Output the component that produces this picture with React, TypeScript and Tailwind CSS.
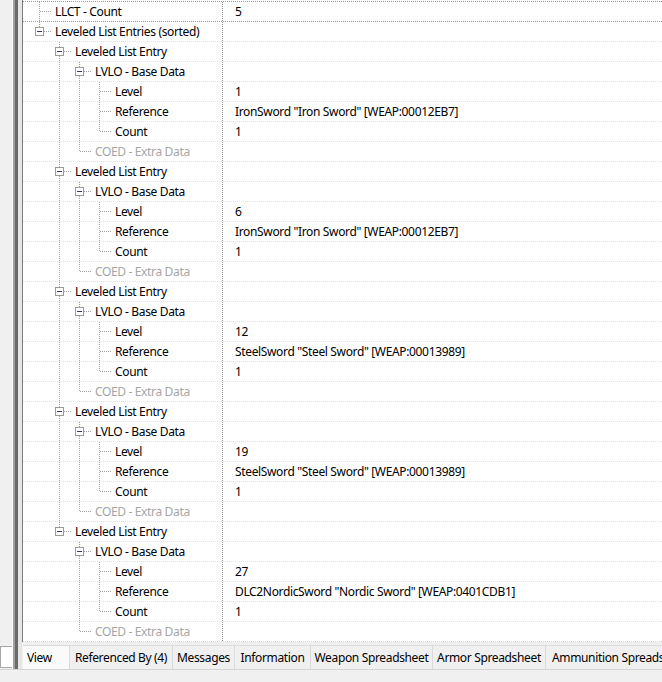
import React from 'react'

type Row = {
  level: number
  label: string
  value?: string
  expander?: boolean
  last?: boolean
  dim?: boolean
  cont: boolean[] // ancestor levels that keep a vertical line going
}

const entries: [string, string][] = [
  ['1', 'IronSword "Iron Sword" [WEAP:00012EB7]'],
  ['6', 'IronSword "Iron Sword" [WEAP:00012EB7]'],
  ['12', 'SteelSword "Steel Sword" [WEAP:00013989]'],
  ['19', 'SteelSword "Steel Sword" [WEAP:00013989]'],
  ['27', 'DLC2NordicSword "Nordic Sword" [WEAP:0401CDB1]'],
]

function buildRows(): Row[] {
  const rows: Row[] = [
    { level: 1, label: 'LLCT - Count', value: '5', cont: [] },
    { level: 1, label: 'Leveled List Entries (sorted)', expander: true, last: true, cont: [] },
  ]
  entries.forEach(([lvl, ref], i) => {
    const more = i < entries.length - 1
    rows.push({ level: 2, label: 'Leveled List Entry', expander: true, last: !more, cont: [false] })
    rows.push({ level: 3, label: 'LVLO - Base Data', expander: true, cont: [false, more] })
    rows.push({ level: 4, label: 'Level', value: lvl, cont: [false, more, true] })
    rows.push({ level: 4, label: 'Reference', value: ref, cont: [false, more, true] })
    rows.push({ level: 4, label: 'Count', value: '1', last: true, cont: [false, more, true] })
    rows.push({ level: 3, label: 'COED - Extra Data', dim: true, last: true, cont: [false, more] })
  })
  return rows
}

const LINE = '#a0a0a0'

function TreeLines({ row }: { row: Row }) {
  const w = 32 + 20 * (row.level - 1)
  const c = 16 + 20 * (row.level - 1)
  return (
    <svg width={w} height={19} className="shrink-0" shapeRendering="crispEdges">
      {row.cont.map((on, k) =>
        on ? (
          <line key={k} x1={16 + 20 * k + 0.5} y1={0} x2={16 + 20 * k + 0.5} y2={19} stroke={LINE} strokeDasharray="1 1" />
        ) : null,
      )}
      <line x1={c + 0.5} y1={0} x2={c + 0.5} y2={row.last ? 10 : 19} stroke={LINE} strokeDasharray="1 1" />
      <line x1={c + 1} y1={9.5} x2={w - 3} y2={9.5} stroke={LINE} strokeDasharray="1 1" />
      {row.expander && (
        <g>
          <rect x={c - 3.5} y={5.5} width={8} height={8} fill="#fff" stroke="#9a9a9a" />
          <line x1={c - 2} y1={9.5} x2={c + 3} y2={9.5} stroke="#2d3b6b" />
        </g>
      )}
    </svg>
  )
}

const tabs: { label: string; w: string }[] = [
  { label: 'View', w: 'w-[47px] justify-start pl-[4px] bg-[#fafafa]' },
  { label: 'Referenced By (4)', w: 'w-[103px] justify-center' },
  { label: 'Messages', w: 'w-[62px] justify-center' },
  { label: 'Information', w: 'w-[76px] justify-center' },
  { label: 'Weapon Spreadsheet', w: 'w-[122px] justify-center' },
  { label: 'Armor Spreadsheet', w: 'w-[113px] justify-center' },
  { label: 'Ammunition Spreadsheet', w: 'w-[140px] justify-start pl-[6px]' },
]

export default function App() {
  const rows = buildRows()
  return (
    <div
      className="flex h-[682px] w-[662px] flex-col overflow-hidden bg-[#f0f0f0] text-[12px] tracking-[-0.35px] text-black"
      style={{ fontFamily: '"Noto Sans", "Open Sans", sans-serif' }}
    >
      <div className="flex h-[669px] shrink-0">
        {/* left splitter strip */}
        <div className="flex w-[23px] shrink-0">
          <div className="flex w-[12px] flex-col justify-end pb-[1px]">
            <div className="h-[22px] border border-r-0 border-[#a8a8a8] bg-white" />
          </div>
          <div className="w-[1px] bg-[#fbfbfb]" />
          <div className="w-[2px] bg-[#a0a0a0]" />
          <div className="w-[3px] bg-[#6b6b6b]" />
          <div className="w-[4px] bg-[#e6e6e6]" />
          <div className="flex w-[1px] flex-col">
            <div className="h-[642px] bg-[#7a7a7a]" />
          </div>
        </div>

        <div className="flex min-w-0 flex-1 flex-col">
          {/* tree */}
          <div className="h-[642px] shrink-0 overflow-hidden border-b border-dotted border-[#d8d8d8] bg-white pt-[1px]">
            {rows.map((row, i) => (
              <div
                key={i}
                className={`flex h-[20px] border-t border-dotted ${i < 2 ? 'border-[#9a9a9a]' : 'border-[#e3e3e3]'}`}
              >
                <div className="flex w-[199px] shrink-0 items-center overflow-hidden">
                  <TreeLines row={row} />
                  <span className={`whitespace-nowrap leading-[19px] ${row.dim ? 'text-[#a6a6a6]' : ''}`}>{row.label}</span>
                </div>
                <div className="flex min-w-0 flex-1 items-center whitespace-nowrap border-l border-dotted border-[#8c8c8c] pl-[12px] leading-[19px]">
                  {row.value}
                </div>
              </div>
            ))}
          </div>

          {/* tab strip */}
          <div className="mt-[3px] flex h-[24px] shrink-0 overflow-hidden border-t border-[#dcdcdc]">
            {tabs.map((t, i) => (
              <div
                key={t.label}
                className={`flex shrink-0 items-center whitespace-nowrap border-r border-[#dadada] pt-[1px] ${t.w} ${
                  i === 0 ? '' : 'bg-[#f0f0f0]'
                }`}
              >
                {t.label}
              </div>
            ))}
          </div>
        </div>
      </div>
      <div className="flex-1 border-t border-[#d5d5d5] bg-[#f0f0f0]" />
    </div>
  )
}
